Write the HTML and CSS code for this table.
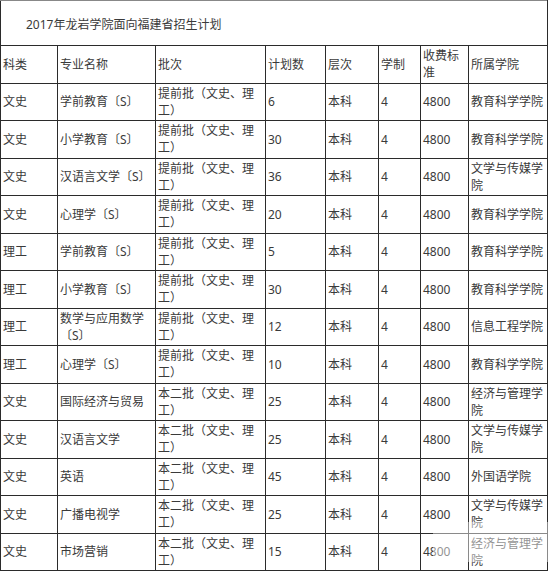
FILE: index.html
```html
<!DOCTYPE html>
<html lang="zh-CN">
<head>
<meta charset="utf-8">
<title>2017年龙岩学院面向福建省招生计划</title>
<link rel="stylesheet" href="styles.css">
</head>
<body>
<div class="page">
<table class="plan">
  <colgroup>
    <col class="c1"><col class="c2"><col class="c3"><col class="c4"><col class="c5"><col class="c6"><col class="c7"><col class="c8">
  </colgroup>
  <tr class="title-row"><td colspan="8" class="title">2017年龙岩学院面向福建省招生计划</td></tr>
  <tr><td>科类</td><td>专业名称</td><td>批次</td><td>计划数</td><td>层次</td><td>学制</td><td>收费标准</td><td>所属学院</td></tr>
  <tr><td>文史</td><td>学前教育〔S〕</td><td>提前批（文史、理工）</td><td>6</td><td>本科</td><td>4</td><td>4800</td><td>教育科学学院</td></tr>
  <tr><td>文史</td><td>小学教育〔S〕</td><td>提前批（文史、理工）</td><td>30</td><td>本科</td><td>4</td><td>4800</td><td>教育科学学院</td></tr>
  <tr><td>文史</td><td>汉语言文学〔S〕</td><td>提前批（文史、理工）</td><td>36</td><td>本科</td><td>4</td><td>4800</td><td>文学与传媒学院</td></tr>
  <tr><td>文史</td><td>心理学〔S〕</td><td>提前批（文史、理工）</td><td>20</td><td>本科</td><td>4</td><td>4800</td><td>教育科学学院</td></tr>
  <tr><td>理工</td><td>学前教育〔S〕</td><td>提前批（文史、理工）</td><td>5</td><td>本科</td><td>4</td><td>4800</td><td>教育科学学院</td></tr>
  <tr><td>理工</td><td>小学教育〔S〕</td><td>提前批（文史、理工）</td><td>30</td><td>本科</td><td>4</td><td>4800</td><td>教育科学学院</td></tr>
  <tr><td>理工</td><td>数学与应用数学〔S〕</td><td>提前批（文史、理工）</td><td>12</td><td>本科</td><td>4</td><td>4800</td><td>信息工程学院</td></tr>
  <tr><td>理工</td><td>心理学〔S〕</td><td>提前批（文史、理工）</td><td>10</td><td>本科</td><td>4</td><td>4800</td><td>教育科学学院</td></tr>
  <tr><td>文史</td><td>国际经济与贸易</td><td>本二批（文史、理工）</td><td>25</td><td>本科</td><td>4</td><td>4800</td><td>经济与管理学院</td></tr>
  <tr><td>文史</td><td>汉语言文学</td><td>本二批（文史、理工）</td><td>25</td><td>本科</td><td>4</td><td>4800</td><td>文学与传媒学院</td></tr>
  <tr><td>文史</td><td>英语</td><td>本二批（文史、理工）</td><td>45</td><td>本科</td><td>4</td><td>4800</td><td>外国语学院</td></tr>
  <tr><td>文史</td><td>广播电视学</td><td>本二批（文史、理工）</td><td>25</td><td>本科</td><td>4</td><td>4800</td><td>文学与传媒学院</td></tr>
  <tr><td>文史</td><td>市场营销</td><td>本二批（文史、理工）</td><td>15</td><td>本科</td><td>4</td><td>4800</td><td>经济与管理学院</td></tr>
</table>
<div class="watermark"></div>
</div>
</body>
</html>
```
FILE: styles.css
```css
html, body {
  margin: 0;
  padding: 0;
  background: #fff;
}
.page {
  position: relative;
  width: 550px;
  height: 576px;
  overflow: hidden;
}
.plan {
  border-collapse: collapse;
  table-layout: fixed;
  width: 548px;
  font-family: "Noto Sans", "Noto Sans CJK SC", sans-serif;
  font-size: 12px;
  line-height: 17px;
  color: #3a3a3a;
  text-spacing-trim: space-all;
  font-feature-settings: "halt" 0, "chws" 0;
}
.c1 { width: 57px; }
.c2 { width: 98px; }
.c3 { width: 110px; }
.c4 { width: 60px; }
.c5 { width: 53px; }
.c6 { width: 42px; }
.c7 { width: 48px; }
.c8 { width: 79px; }
.plan td {
  border: 1px solid #2b2b2b;
  padding: 0 2px;
  height: 36.5px;
  vertical-align: middle;
  text-align: left;
  word-break: normal;
}
.plan .title-row td {
  height: 42px;
  padding-left: 25px;
  padding-top: 2px;
  border-top-color: #888;
}
.watermark {
  position: absolute;
  left: 433px;
  top: 522px;
  width: 115px;
  height: 40px;
  background: rgba(255, 255, 255, 0.45);
}
```
